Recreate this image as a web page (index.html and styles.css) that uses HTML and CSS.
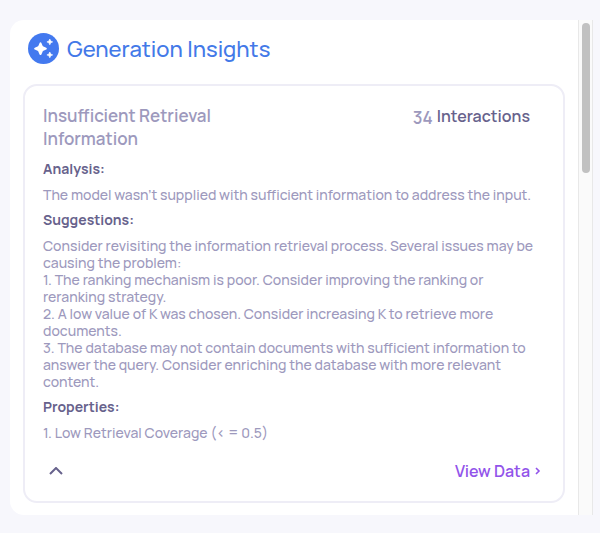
FILE: index.html
```html
<!DOCTYPE html>
<html lang="en">
<head>
<meta charset="utf-8">
<title>Generation Insights</title>
<link rel="stylesheet" href="styles.css">
</head>
<body>
<main class="panel">
  <div class="content">
    <header class="heading">
      <svg class="badge" viewBox="0 0 31 31" aria-hidden="true">
        <circle cx="15.500" cy="15.500" r="15.500" fill="#4379ef"/>
        <path fill="#fff" d="M12.500 9.200c.5 0 .7.300.9.800l1.200 2.700c.200.500.400.700.900.900l2.700 1.200c.900.400.900 1.400 0 1.800l-2.700 1.200c-.5.200-.7.400-.9.900l-1.200 2.700c-.4.900-1.400.9-1.800 0l-1.200-2.700c-.2-.5-.4-.7-.9-.9l-2.700-1.200c-.9-.4-.9-1.400 0-1.800l2.700-1.200c.5-.2.7-.4.900-.9l1.200-2.700c.2-.5.400-.8.900-.8z"/>
        <path fill="#fff" d="M21.800 6l.9 2 2 .9-2 .9-.9 2-.9-2-2-.9 2-.9zM21.800 19l.9 2 2 .9-2 .9-.9 2-.9-2-2-.9 2-.9z" stroke="#fff" stroke-width=".6" stroke-linejoin="round"/>
      </svg>
      <h1>Generation Insights</h1>
    </header>
    <article class="card">
      <div class="summary">
        <h2>Insufficient Retrieval Information</h2>
        <p class="count"><span class="number">34</span> Interactions</p>
      </div>
      <h3>Analysis:</h3>
      <p>The model wasn’t supplied with sufficient information to address the input.</p>
      <h3>Suggestions:</h3>
      <p>Consider revisiting the information retrieval process. Several issues may be</p>
      <p>causing the problem:</p>
      <p>1. The ranking mechanism is poor. Consider improving the ranking or</p>
      <p>reranking strategy.</p>
      <p>2. A low value of K was chosen. Consider increasing K to retrieve more</p>
      <p>documents.</p>
      <p>3. The database may not contain documents with sufficient information to</p>
      <p>answer the query. Consider enriching the database with more relevant</p>
      <p>content.</p>
      <h3>Properties:</h3>
      <p>1. Low Retrieval Coverage (‹ = 0.5)</p>
      <footer class="actions">
        <button class="collapse" type="button" aria-label="Collapse">
          <svg viewBox="0 0 14 8" aria-hidden="true"><path d="M1 7l6-6 6 6" fill="none" stroke="currentColor" stroke-width="2"/></svg>
        </button>
        <a class="view" href="#">View Data
          <svg viewBox="0 0 6 8" aria-hidden="true"><path d="M1 1l3 3-3 3" fill="none" stroke="currentColor" stroke-width="1.600"/></svg>
        </a>
      </footer>
    </article>
  </div>
  <div class="track"><div class="thumb"></div></div>
</main>
</body>
</html>
```
FILE: styles.css
```css
* {
  box-sizing: border-box;
}

body {
  margin: 0;
  padding: 20px 7px 18px 10px;
  background: #f7f7fc;
  color: #9d99bd;
  font: 500 14px/17px Manrope, Inter, sans-serif;
}

h1, h2, h3, p {
  margin: 0;
}

.panel {
  display: flex;
  border-radius: 14px 0 0 14px;
  background: #fff;
}

.content {
  flex: 1;
  min-width: 0;
  padding: 13px 13px 12px;
}

.heading {
  display: flex;
  align-items: center;
  gap: 8px;
  margin-left: 5px;
}

.badge {
  width: 31px;
  height: 31px;
}

h1 {
  padding-top: 1px;
  color: #4379e8;
  font-size: 22px;
  line-height: 30px;
  font-weight: 500;
}

.card {
  margin-top: 20px;
  padding: 18px;
  border: 2px solid #eeedf6;
  border-radius: 14px;
}

.summary {
  display: flex;
  justify-content: space-between;
}

h2 {
  width: 200px;
  font-size: 17px;
  line-height: 23px;
  font-weight: 600;
}

.count {
  display: flex;
  gap: 4px;
  padding: 1px 15px 0 0;
  color: #67628c;
  font-size: 16px;
  line-height: 23px;
  font-weight: 600;
}

.number {
  padding-top: 1px;
  color: #9d99bd;
  font-size: 17px;
}

h3 {
  margin: 8px 0 9px;
  color: #67628c;
  font-size: 14px;
  line-height: 17px;
  font-weight: 700;
}

.card p {
  white-space: nowrap;
}

.summary + h3 {
  margin-top: 10px;
}

.actions {
  display: flex;
  align-items: center;
  justify-content: space-between;
  margin-top: 18px;
}

.collapse {
  display: flex;
  padding: 6px;
  border: 0;
  background: none;
  color: #67628c;
}

.collapse svg {
  width: 14px;
  height: 8px;
}

.view {
  display: flex;
  align-items: center;
  gap: 5px;
  margin-right: 4px;
  color: #9254ea;
  font-size: 16px;
  line-height: 24px;
  font-weight: 600;
  text-decoration: none;
}

.view svg {
  width: 6px;
  height: 8px;
}

.track {
  width: 15px;
  padding: 3px;
  border: solid #e8e8e8;
  border-width: 0 1px;
  background: #fafafa;
}

.thumb {
  width: 8px;
  height: 150px;
  border-radius: 4px;
  background: #c1c1c1;
}
```
